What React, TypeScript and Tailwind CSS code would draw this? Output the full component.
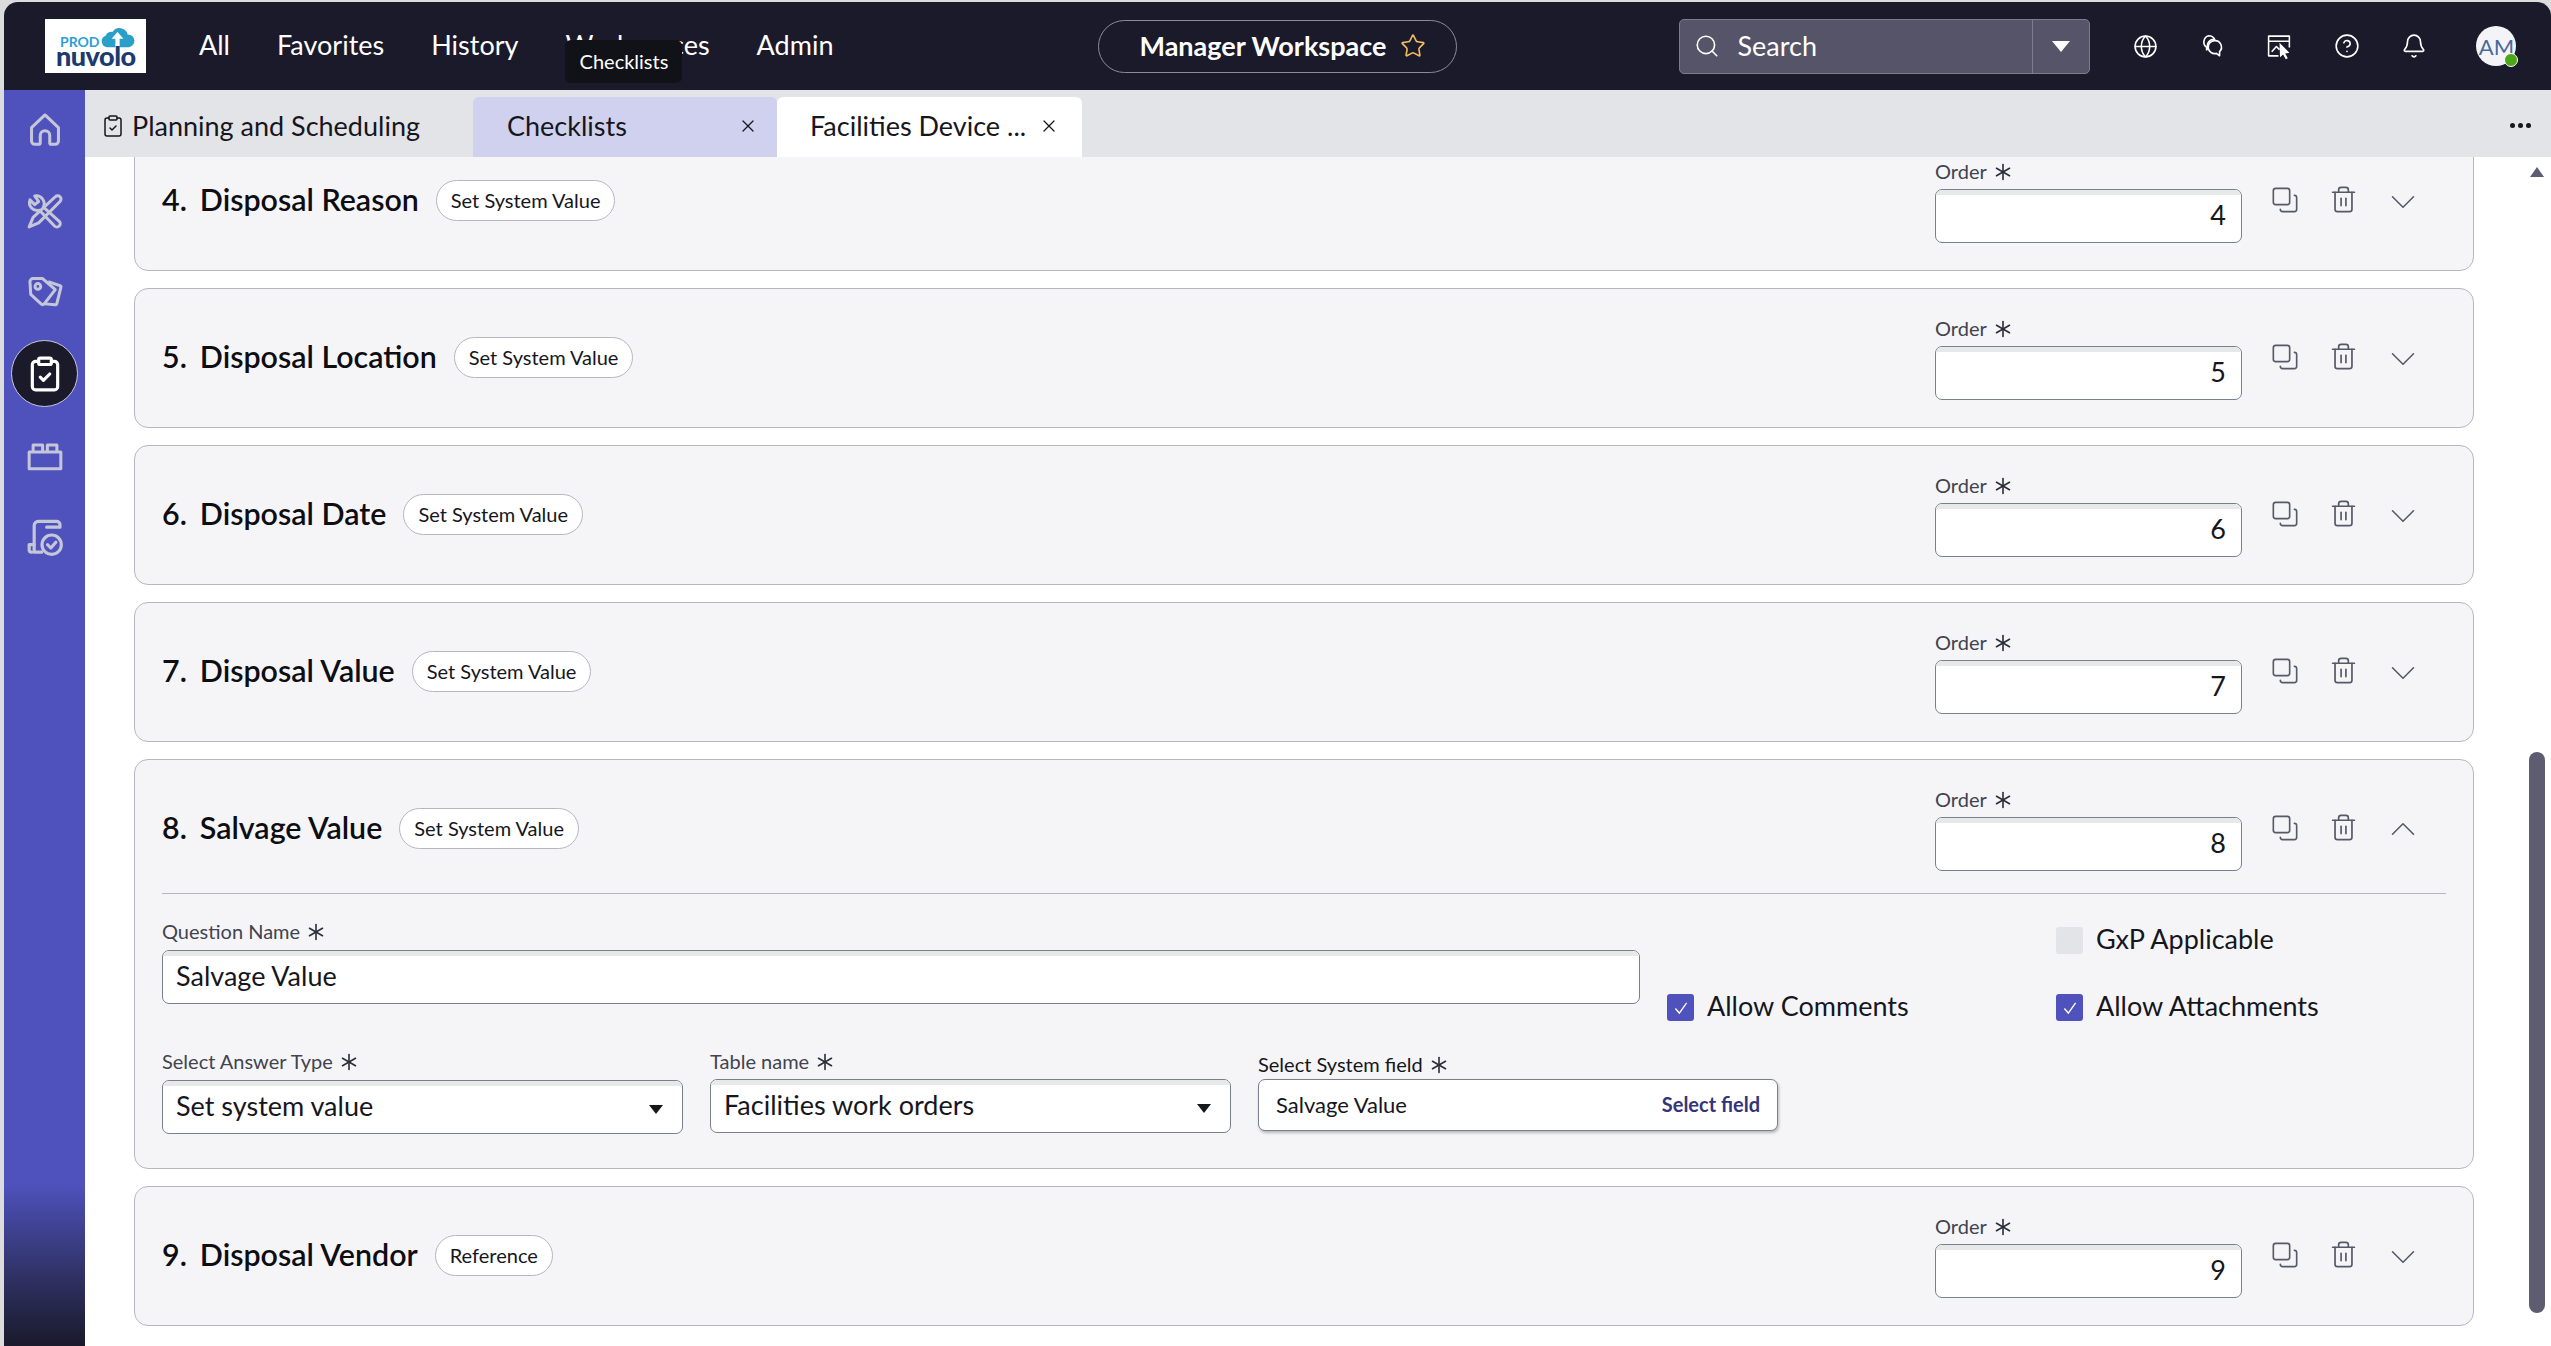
import React from 'react';
import { Asterisk, Bell, ChevronDown, ChevronUp, CircleHelp, ClipboardCheck, Copy, Globe, Search, Star, Trash2, X } from 'lucide-react';

const HomeIcon = () => (
  <svg viewBox="0 0 24 24" className="w-[38px] h-[38px]" fill="none" stroke="currentColor" strokeWidth="1.9" strokeLinejoin="round">
    <path d="M3.5 10.5 12 2.5l8.5 8v8.5a2 2 0 0 1-2 2H16a1 1 0 0 1-1-1v-4.500a3 3 0 0 0-6 0V20a1 1 0 0 1-1 1H5.500a2 2 0 0 1-2-2z" />
  </svg>
);

const ToolsIcon = () => (
  <svg viewBox="0 0 24 24" className="w-[38px] h-[38px]" fill="none" stroke="currentColor" strokeWidth="1.9" strokeLinejoin="round">
    <path d="M18.500 3a2 2 0 0 1 3 3L8 19.500l-6 2.500 2.500-6z" />
    <path d="M2.500 5 5.500 8 8 6 5.500 2.500A5 5 0 0 1 11 9.500l10 9a2 2 0 0 1-3 3l-9.500-10A5 5 0 0 1 2.500 5z" />
  </svg>
);

const TagsIcon = () => (
  <svg viewBox="0 0 24 24" className="w-[38px] h-[38px]" fill="none" stroke="currentColor" strokeWidth="1.9" strokeLinejoin="round">
    <path d="M2.500 5.500a2 2 0 0 1 2-2h6l8 7-7 9a1.500 1.500 0 0 1-2 0L3 13.500z" />
    <circle cx="7.500" cy="8.500" r="1.800" />
    <path d="M14 5.500 21.500 8a1 1 0 0 1 .5 1.200l-2.500 10a1 1 0 0 1-1.200.8L12 19.500" />
  </svg>
);

const BlocksIcon = () => (
  <svg viewBox="0 0 24 24" className="w-[38px] h-[38px]" fill="none" stroke="currentColor" strokeWidth="1.9" strokeLinejoin="round">
    <path d="M2 9.500h20V20H2zM4.500 9.500V5h6v4.500M13.500 9.500V5h6v4.500" />
  </svg>
);

const ScrollCheckIcon = () => (
  <svg viewBox="0 0 24 24" className="w-[40px] h-[40px]" fill="none" stroke="currentColor" strokeWidth="1.9" strokeLinejoin="round" strokeLinecap="round">
    <path d="M10 20.500H5.500V4.500A2.500 2.500 0 0 1 8 2h11a2 2 0 0 1 2 2v1.500h-8" />
    <path d="M5.500 16H2.500v3a1.500 1.500 0 0 0 1.500 1.500" />
    <circle cx="16" cy="16" r="5.800" />
    <path d="m13.500 16 2 2 3-3.500" />
  </svg>
);

const ChatIcon = () => (
  <svg viewBox="0 0 24 24" className="w-[26px] h-[26px]" fill="none" stroke="currentColor" strokeWidth="1.500" strokeLinejoin="round">
    <path d="M9 2.500a6.500 6.500 0 0 1 5.500 3.300A6 6 0 0 0 8.500 14.500l-1.500 1v-2.300A6 6 0 0 1 9 2.500z" />
    <path d="M14.500 7a6 6 0 0 1 4.500 10.200V21l-3-2.200A6 6 0 1 1 14.500 7z" />
  </svg>
);

const BoardCursorIcon = () => (
  <svg viewBox="0 0 26 26" className="w-[27px] h-[27px]" fill="none" stroke="currentColor" strokeWidth="1.500" strokeLinejoin="round">
    <path d="M12 22H2.500V3h20v11M2.500 8h20M5.500 18l4.500-5 3 3" />
    <path d="M13 9.500 22.500 19l-4 .8 2.500 4.500-2 1-2.500-4.500-3 2.500z" fill="currentColor" stroke="none" />
  </svg>
);

const LogoCloud = () => (
  <svg viewBox="0 0 40 26" className="w-[35px] h-[22px] shrink-0">
    <path d="M8 25a7 7 0 0 1-2-13.600A8 8 0 0 1 14 7 10 10 0 0 1 32 10a7.500 7.500 0 0 1 1 15z" fill="#2a9fc7" />
    <path d="M20 7l7 8h-4.500v11h-5V15H13z" fill="#ffffff" />
  </svg>
);

const Req = ({ label, tight }: { label: string; tight?: boolean }) => (
  <div className={`flex items-center gap-[1px] h-[24px] text-[20px] leading-[24px] ${tight ? 'text-[#16161d]' : 'text-[#42434f]'}`}>
    <span>{label}</span>
    <Asterisk size={30} strokeWidth={1.300} className="text-[#2d2e38] -mt-[2px] -mb-[4px]" />
  </div>
);

const Field = ({ value, className, right, caret }: { value?: string; className: string; right?: boolean; caret?: boolean }) => (
  <div className={`h-[54px] rounded-[7px] border border-[#7a7f8c] bg-white overflow-hidden flex flex-col ${className}`}>
    <div className="h-[5px] bg-[#e7e8e8] shrink-0" />
    <div className={`flex-1 flex items-center pl-[13px] text-[27px] text-[#16161d] ${right ? 'justify-end pr-[15px] pb-[6px]' : 'justify-between pr-[19px] pb-[8px]'}`}>
      <span>{value}</span>
      {caret && <span className="w-0 h-0 mt-[6px] border-l-[7px] border-r-[7px] border-t-[9px] border-l-transparent border-r-transparent border-t-[#16161d]" />}
    </div>
  </div>
);

const Check = ({ label, checked }: { label: string; checked?: boolean }) => (
  <div className="flex items-center gap-[13px] h-[27px]">
    <div className={`w-[27px] h-[27px] rounded-[3px] flex items-center justify-center ${checked ? 'bg-[#4f52bd]' : 'bg-[#e3e4e8]'}`}>
      {checked && (
        <svg viewBox="0 0 16 16" className="w-[18px] h-[18px]" fill="none" stroke="#ffffff" strokeWidth="1.200">
          <path d="m3 8.500 3.500 4L13 3.500" />
        </svg>
      )}
    </div>
    <span className="text-[27px] text-[#16161d] pb-[3px]">{label}</span>
  </div>
);

const Question = ({ num, title, type, open }: { num: number; title: string; type: string; open?: boolean }) => (
  <div className={`rounded-[14px] border border-[#b4b6c2] bg-[#f5f5f8] px-[27px] ${open ? 'pb-[34px]' : 'h-[140px]'}`}>
    <div className="flex h-[133px]">
      <div className="flex items-center gap-[17px] mt-[48px] h-[40px]">
        <h2 className="text-[30.400px] font-semibold text-[#0d0d12] flex gap-[13px]">
          <span>{num}.</span>
          <span>{title}</span>
        </h2>
        <span className="h-[41px] px-[14px] flex items-center rounded-full border border-[#b4b6c2] bg-white text-[20px] text-[#16161d]">{type}</span>
      </div>
      <div className="ml-auto flex">
        <div className="mt-[27px]">
          <Req label="Order" />
          <Field value={String(num)} right className="w-[307px] mt-[6px]" />
        </div>
        <div className="flex items-start gap-[30px] ml-[29px] mt-[48px] mr-[28px] text-[#565968]">
          <Copy size={28} strokeWidth={1.400} className="-scale-x-100 -scale-y-100 mt-[6px]" />
          <Trash2 size={29} strokeWidth={1.400} className="mt-[5px]" />
          <div className="w-[30px] flex justify-center">
            {open
              ? <ChevronUp size={42} strokeWidth={0.900} className="-mx-[6px] shrink-0" />
              : <ChevronDown size={42} strokeWidth={0.900} className="-mx-[6px] mt-[1px] shrink-0" />}
          </div>
        </div>
      </div>
    </div>
    {open && (
      <div className="border-t border-[#b4b6c2] pt-[25px]">
        <div className="flex">
          <div className="w-[1478px]">
            <Req label="Question Name" />
            <Field value={title} className="mt-[7px]" />
          </div>
          <div className="w-[389px] ml-[27px] flex flex-col justify-end">
            <Check label="Allow Comments" checked />
          </div>
          <div className="flex flex-col gap-[40px] pt-[8px]">
            <Check label="GxP Applicable" />
            <Check label="Allow Attachments" checked />
          </div>
        </div>
        <div className="flex items-start gap-[27px] mt-[28px]">
          <div className="w-[521px]">
            <Req label="Select Answer Type" />
            <Field value="Set system value" caret className="mt-[7px]" />
          </div>
          <div className="w-[521px]">
            <Req label="Table name" />
            <Field value="Facilities work orders" caret className="mt-[6px]" />
          </div>
          <div className="w-[520px]">
            <div className="mt-[3px]">
              <Req label="Select System field" tight />
            </div>
            <div className="mt-[3px] h-[52px] rounded-[7px] border border-[#7a7f8c] bg-white shadow-[1px_2px_3px_rgba(0,0,0,0.25)] flex items-center justify-between pl-[17px] pr-[17px] text-[22px] pb-[2px]">
              <span className="text-[#16161d]">Salvage Value</span>
              <span className="text-[20px] font-bold text-[#34347c]">Select field</span>
            </div>
          </div>
        </div>
      </div>
    )}
  </div>
);

const questions = [
  { num: 4, title: 'Disposal Reason', type: 'Set System Value' },
  { num: 5, title: 'Disposal Location', type: 'Set System Value' },
  { num: 6, title: 'Disposal Date', type: 'Set System Value' },
  { num: 7, title: 'Disposal Value', type: 'Set System Value' },
  { num: 8, title: 'Salvage Value', type: 'Set System Value', open: true },
  { num: 9, title: 'Disposal Vendor', type: 'Reference' },
];

export default function App() {
  return (
    <div className="h-[1346px] w-[2551px] overflow-hidden bg-[#dcdcdc] pt-[2px] pl-[4px] flex flex-col font-['Lato',sans-serif]">
      <header className="h-[88px] shrink-0 rounded-t-[14px] bg-[#1a1a2b] text-white flex items-center">
        <div className="w-[101px] h-[54px] ml-[41px] shrink-0 bg-white flex flex-col pt-[7px] pl-[11px] pr-[12px]">
          <div className="flex items-end justify-between h-[22px]">
            <span className="text-[14px] leading-[14px] font-bold text-[#2a9fd8] ml-[4px] -mb-[1px]">PROD</span>
            <LogoCloud />
          </div>
          <span className="text-[27px] leading-[20px] font-black text-[#1c3a6e] -mt-[2px] -tracking-[0.5px]">nuvolo</span>
        </div>
        <nav className="flex gap-[47px] ml-[53px] text-[27px] pb-[2px] shrink-0">
          <span>All</span>
          <span>Favorites</span>
          <span>History</span>
          <span className="relative">
            Workspaces
            <span className="absolute left-0 top-[15px] w-[117px] h-[43px] rounded-[6px] bg-[#101218] text-[20px] flex items-center justify-center">Checklists</span>
          </span>
          <span>Admin</span>
        </nav>
        <div className="ml-[265px] w-[359px] h-[53px] shrink-0 rounded-full border border-[#8b8b9b] flex items-center pl-[40px] gap-[14px] text-[27px] font-bold">
          <span>Manager Workspace</span>
          <Star size={26} strokeWidth={1.500} className="text-[#f0bd62]" />
        </div>
        <div className="ml-[222px] w-[411px] h-[55px] shrink-0 rounded-[5px] border border-[#7d7c8e] bg-[#565469] flex items-center">
          <Search size={26} strokeWidth={1.500} className="ml-[14px]" />
          <span className="ml-[17px] text-[27px]">Search</span>
          <div className="ml-auto w-[57px] h-full border-l border-[#7d7c8e] flex items-center justify-center">
            <span className="w-0 h-0 border-l-[9px] border-r-[9px] border-t-[11px] border-l-transparent border-r-transparent border-t-white" />
          </div>
        </div>
        <div className="flex items-center gap-[41px] ml-[43px] shrink-0">
          <Globe size={25} strokeWidth={1.500} />
          <ChatIcon />
          <BoardCursorIcon />
          <CircleHelp size={26} strokeWidth={1.500} />
          <Bell size={26} strokeWidth={1.500} />
        </div>
        <div className="relative ml-[49px] w-[40px] h-[40px] shrink-0 rounded-full bg-[#f4f4f8] flex items-center justify-center text-[22px] text-[#4a6a9c]">
          AM
          <span className="absolute right-[-2px] bottom-[-1px] w-[14px] h-[14px] rounded-full bg-[#4ca61a] border border-white" />
        </div>
      </header>

      <div className="flex-1 flex min-h-0">
        <aside className="w-[81px] shrink-0 bg-linear-to-b from-[#4f52bd] from-[87%] to-[#1a1a2b] text-[#c5c7d9] flex flex-col items-center pt-[21px]">
          <div className="h-[81px] flex items-start"><HomeIcon /></div>
          <div className="h-[81px] flex items-start"><ToolsIcon /></div>
          <div className="h-[67px] flex items-start"><TagsIcon /></div>
          <div className="w-[67px] h-[67px] rounded-full bg-[#1a1a2b] border border-[#c5c7d9] flex items-center justify-center text-white">
            <ClipboardCheck size={38} strokeWidth={2} />
          </div>
          <div className="h-[81px] flex items-start mt-[30px]"><BlocksIcon /></div>
          <ScrollCheckIcon />
        </aside>

        <main className="flex-1 min-w-0 flex flex-col bg-white">
          <div className="h-[67px] shrink-0 bg-[#e3e4e8] flex items-end text-[27px] text-[#16161d]">
            <div className="h-[60px] w-[388px] flex items-center gap-[7px] pl-[16px] pb-[2px]">
              <ClipboardCheck size={24} strokeWidth={1.500} />
              <span>Planning and Scheduling</span>
            </div>
            <div className="h-[60px] w-[304px] bg-[#d0d1ee] rounded-t-[6px] flex items-center justify-between pl-[34px] pr-[19px] pb-[2px]">
              <span>Checklists</span>
              <X size={20} strokeWidth={1.500} />
            </div>
            <div className="h-[60px] w-[305px] bg-white rounded-t-[6px] flex items-center justify-between pl-[33px] pr-[23px] pb-[2px]">
              <span>Facilities Device ...</span>
              <X size={20} strokeWidth={1.500} />
            </div>
            <div className="ml-auto h-[60px] pr-[20px] flex items-center gap-[3px] pb-[4px]">
              <span className="w-[5px] h-[5px] rounded-full bg-[#16161d]" />
              <span className="w-[5px] h-[5px] rounded-full bg-[#16161d]" />
              <span className="w-[5px] h-[5px] rounded-full bg-[#16161d]" />
            </div>
          </div>

          <div className="flex-1 min-h-0 flex overflow-hidden">
            <div className="w-[2340px] shrink-0 ml-[49px] -mt-[26px] flex flex-col gap-[17px]">
              {questions.map(q => <Question key={q.num} {...q} />)}
            </div>
            <div className="ml-[55px] w-[16px] flex flex-col items-center">
              <span className="mt-[10px] w-0 h-0 border-l-[7px] border-r-[7px] border-b-[10px] border-l-transparent border-r-transparent border-b-[#5d5c70]" />
              <div className="mt-[575px] w-[16px] h-[561px] shrink-0 rounded-full bg-[#5d5c70]" />
            </div>
          </div>
        </main>
      </div>
    </div>
  );
}
